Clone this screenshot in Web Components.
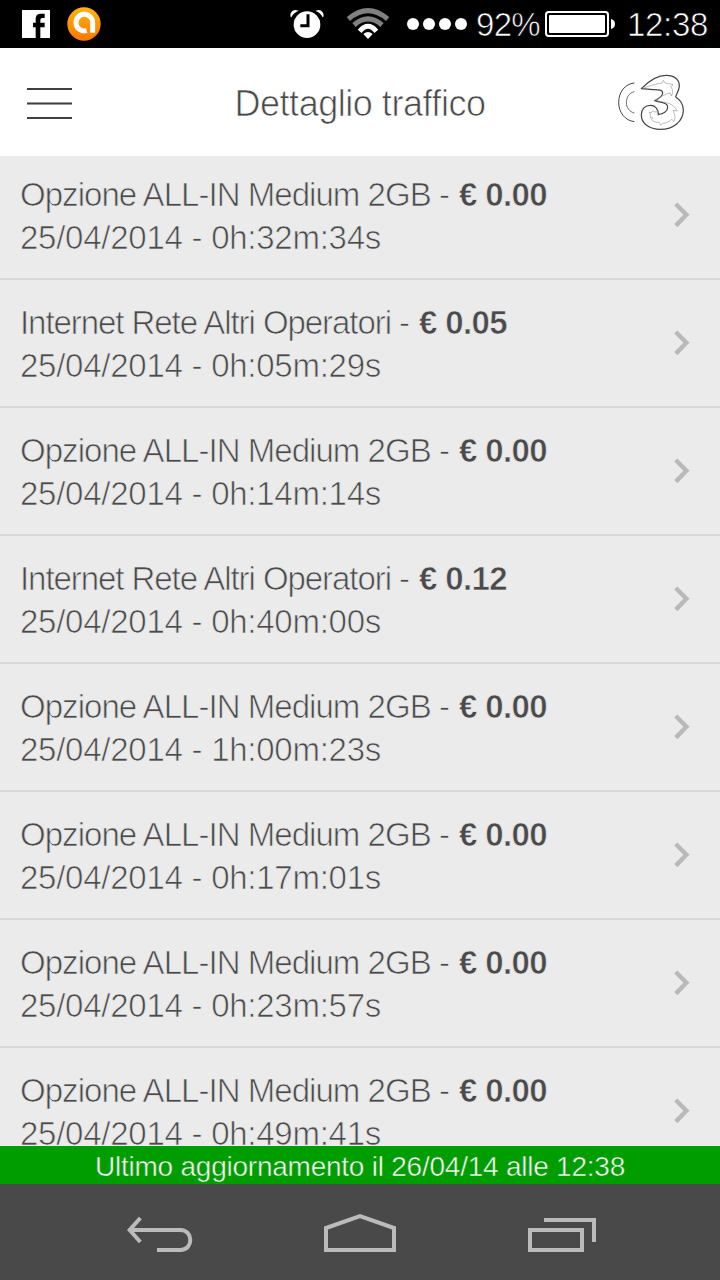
<!DOCTYPE html>
<html lang="it">
<head>
<meta charset="utf-8">
<title>Dettaglio traffico</title>
<style>
  html, body {
    margin: 0;
    background: #000;
  }

  body {
    width: 720px;
    height: 1280px;
    overflow: hidden;
    font-family: "Liberation Sans", Arial, sans-serif;
  }
</style>
</head>
<body>
<phone-screen>
  <status-bar slot="status" battery="92%" time="12:38"></status-bar>
  <app-header slot="header">Dettaglio traffico</app-header>
  <traffic-row kind="all" price="€ 0.00" when="25/04/2014 - 0h:32m:34s">Opzione ALL-IN Medium 2GB -</traffic-row>
  <traffic-row kind="net" price="€ 0.05" when="25/04/2014 - 0h:05m:29s">Internet Rete Altri Operatori -</traffic-row>
  <traffic-row kind="all" price="€ 0.00" when="25/04/2014 - 0h:14m:14s">Opzione ALL-IN Medium 2GB -</traffic-row>
  <traffic-row kind="net" price="€ 0.12" when="25/04/2014 - 0h:40m:00s">Internet Rete Altri Operatori -</traffic-row>
  <traffic-row kind="all" price="€ 0.00" when="25/04/2014 - 1h:00m:23s">Opzione ALL-IN Medium 2GB -</traffic-row>
  <traffic-row kind="all" price="€ 0.00" when="25/04/2014 - 0h:17m:01s">Opzione ALL-IN Medium 2GB -</traffic-row>
  <traffic-row kind="all" price="€ 0.00" when="25/04/2014 - 0h:23m:57s">Opzione ALL-IN Medium 2GB -</traffic-row>
  <traffic-row kind="all" price="€ 0.00" when="25/04/2014 - 0h:49m:41s">Opzione ALL-IN Medium 2GB -</traffic-row>
  <update-bar slot="update">Ultimo aggiornamento il 26/04/14 alle 12:38</update-bar>
  <nav-bar slot="nav"></nav-bar>
</phone-screen>

<script>
class BaseElement extends HTMLElement {
  constructor() {
    super()
    const template = document.createElement('template')
    template.innerHTML = this.render()
    const shadow = this.attachShadow({mode: "open"})
    shadow.append(template.content.cloneNode(true))
  }
}

// Text that is spread or squeezed with letter-spacing to a given width.
// The stroke has the colour of the background, so the letters get thinner.
class FitText extends BaseElement {
  render() {
    return `
      <style>
        :host {
          display: block;
        }

        span {
          display: block;
          width: max-content;
          white-space: pre;
          -webkit-text-stroke: var(--thin, 0.7px) var(--under, #ebebeb);
        }
      </style>
      <span><slot></slot></span>
    `
  }

  connectedCallback() {
    const span = this.shadowRoot.querySelector('span')
    const nodes = this.shadowRoot.querySelector('slot').assignedNodes({flatten: true})
    const count = nodes.map((node) => node.textContent).join('').length
    const natural = span.getBoundingClientRect().width
    span.style.letterSpacing = (Number(this.getAttribute('width')) - natural) / count + 'px'
  }
}

class PhoneScreen extends BaseElement {
  render() {
    return `
      <style>
        :host {
          display: grid;
          grid-template-rows: 48px 108px 990px 38px 96px;
          width: 720px;
          height: 1280px;
        }

        .list {
          overflow: hidden;
          background: #ebebeb;
        }

        .rows {
          margin-top: -4px;
        }
      </style>
      <slot name="status"></slot>
      <slot name="header"></slot>
      <div class="list"><div class="rows"><slot></slot></div></div>
      <slot name="update"></slot>
      <slot name="nav"></slot>
    `
  }
}

class StatusBar extends BaseElement {
  render() {
    return `
      <style>
        :host {
          display: flex;
          align-items: center;
          justify-content: space-between;
          background: #000;
          color: #fff;
          font-size: 33px;
          line-height: 48px;
          --under: #000;
        }

        .group {
          display: flex;
          align-items: center;
          height: 48px;
        }

        .apps {
          padding-left: 20px;
        }

        .info {
          padding-right: 12px;
        }

        svg {
          display: block;
        }

        fit-text {
          padding-top: 2px;
        }

        .battery {
          margin: 0 12px 0 5px;
        }
      </style>
      <div class="group apps">
        <svg width="84" height="48" viewBox="60 0 252 144">
          <defs>
            <linearGradient id="orange" x1="0" y1="0" x2="0" y2="1">
              <stop offset="0" stop-color="#ffb608"/>
              <stop offset="1" stop-color="#ff7600"/>
            </linearGradient>
          </defs>
          <path fill="#fff" d="M66 30H150V114H121V82H134V68H121V60Q121 54 127 54H134V41H122Q107 41 107 57V68H99V82H107V114H66Z"/>
          <circle cx="252" cy="72" r="50" fill="url(#orange)"/>
          <path fill="none" stroke="#fff" stroke-width="15" d="M260 92A25 25 0 1 1 278 70V98"/>
        </svg>
      </div>
      <div class="group info">
        <svg width="186" height="48" viewBox="60 0 558 144">
          <g fill="#fff">
            <circle cx="111" cy="74" r="40"/>
            <path d="M62 51C59 40 66 31 76 30L86 32C75 36 68 43 64 52ZM160 51C163 40 156 31 146 30L136 32C147 36 154 43 158 52Z"/>
            <circle cx="429" cy="72" r="18"/>
            <circle cx="477" cy="72" r="18"/>
            <circle cx="525" cy="72" r="18"/>
            <circle cx="573" cy="72" r="18"/>
          </g>
          <path fill="none" stroke="#000" stroke-width="9" d="M114 43V77H91"/>
          <g fill="none" stroke-width="15">
            <path stroke="#808080" d="M235 57Q294 7 353 57M252 75Q294 38 336 75"/>
            <path stroke="#fff" d="M269 94Q294 64 319 94"/>
          </g>
          <path fill="#fff" d="M280 102Q294 90 308 102L294 117Z"/>
        </svg>
        <fit-text width="64">${this.getAttribute('battery')}</fit-text>
        <svg class="battery" width="70" height="48" viewBox="255 0 210 144">
          <rect x="258" y="36" width="186" height="72" rx="8" fill="none" stroke="#fff" stroke-width="6"/>
          <rect x="267" y="45" width="168" height="54" rx="3" fill="#fff"/>
          <path fill="#fff" d="M453 57Q465 60 465 72T453 87Z"/>
        </svg>
        <fit-text width="81">${this.getAttribute('time')}</fit-text>
      </div>
    `
  }
}

class AppHeader extends BaseElement {
  render() {
    return `
      <style>
        :host {
          display: grid;
          grid-template-columns: 75px 1fr 75px;
          align-items: center;
          padding: 0 27px;
          background: #fff;
          color: #4a4a4a;
          font-size: 36px;
          line-height: 44px;
          --under: #fff;
        }

        .title {
          justify-self: center;
          padding-top: 4px;
        }

        .menu {
          display: block;
        }

        .logo {
          display: block;
          justify-self: end;
          margin-right: 7px;
        }
      </style>
      <svg class="menu" width="45" height="34" viewBox="0 0 45 34">
        <path fill="#3f3d3e" d="M0 3H45V5H0ZM0 32H45V34H0Z"/>
        <path fill="#999" d="M0 17H45V20H0Z"/>
        <path fill="#3f3d3e" d="M0 18H45V19H0Z"/>
      </svg>
      <fit-text class="title" width="251"><slot></slot></fit-text>
      <svg class="logo" width="70" height="60" viewBox="48 36 210 180" fill="none" stroke="#444">
        <path stroke-width="3.6" stroke-linejoin="round" d="M124 86C143 66 172 46 199 46C224 46 239 60 238 79C237 92 229 102 227 111C240 119 250 132 250 151C250 184 220 208 181 208C147 208 124 190 124 165C124 147 135 136 151 136C167 136 174 148 176 163C189 163 203 154 203 141C203 127 184 129 164 122C176 116 188 109 188 99C188 88 174 89 160 89Z"/>
        <path stroke-width="3" d="M103 69C76 71 56 96 56 127C56 158 76 182 103 185"/>
        <path stroke-width="2.4" d="M103 95C87 99 79 113 79 127C79 143 88 155 103 159"/>
        <path stroke="#888" stroke-width="1.7" d="M130 84C149 78 171 70 186 69L190 61L195 69C204 73 211 70 219 74L212 80C219 88 220 99 214 108L211 99C197 101 181 111 168 120M169 121C190 128 211 126 224 142L232 153L219 151C226 164 226 176 222 184L215 178C207 184 200 190 188 190L183 196L178 187C168 188 160 185 154 179L159 174L150 173C153 168 151 160 147 156L154 159C154 152 160 152 165 157C170 151 173 157 172 165L177 166"/>
      </svg>
    `
  }
}

class TrafficRow extends BaseElement {
  render() {
    return `
      <style>
        :host {
          box-sizing: border-box;
          display: flex;
          align-items: center;
          justify-content: space-between;
          height: 128px;
          padding: 0 30px 0 20px;
          border-bottom: 2px solid #d9d9dc;
          color: #4a4a4a;
          font-size: 33px;
          line-height: 43px;
        }

        .text {
          padding-top: 2px;
        }

        .line {
          display: flex;
          height: 43px;
        }

        .price {
          margin-left: 10px;
          font-weight: bold;
          --thin: 0.6px;
        }

        svg {
          display: block;
        }
      </style>
      <div class="text">
        <div class="line">
          <fit-text width="${this.getAttribute('kind') === 'net' ? 389 : 429}"><slot></slot></fit-text>
          <fit-text class="price" width="88">${this.getAttribute('price')}</fit-text>
        </div>
        <div class="line">
          <fit-text width="361">${this.getAttribute('when')}</fit-text>
        </div>
      </div>
      <svg width="16" height="26" viewBox="0 0 16 26">
        <path fill="none" stroke="#b9b9b9" stroke-width="4.4" d="M1.8 2L12.4 12.8L1.8 23.6"/>
      </svg>
    `
  }
}

class UpdateBar extends BaseElement {
  render() {
    return `
      <style>
        :host {
          display: flex;
          justify-content: center;
          background: #009d00;
          color: #fff;
          font-size: 28px;
          line-height: 41px;
          --under: #009d00;
          --thin: 0.5px;
        }
      </style>
      <fit-text width="530"><slot></slot></fit-text>
    `
  }
}

class NavBar extends BaseElement {
  render() {
    return `
      <style>
        :host {
          box-sizing: border-box;
          display: flex;
          justify-content: center;
          align-items: center;
          gap: 90px;
          padding: 6px 0 0 10px;
          background: #49494a;
        }
      </style>
      <svg width="110" height="70" viewBox="0 0 330 210" fill="none" stroke="#bbb" stroke-width="12">
        <path d="M59 90H211C251 90 251 150 211 150H141M91 54L59 90L91 126"/>
      </svg>
      <svg width="110" height="70" viewBox="0 0 330 210" fill="none" stroke="#bbb" stroke-width="12">
        <path d="M48 150V84L150 48L252 84V150Z"/>
      </svg>
      <svg width="110" height="70" viewBox="0 0 330 210" fill="none" stroke="#bbb" stroke-width="12">
        <path d="M60 90H216V150H60ZM102 60H252V126"/>
      </svg>
    `
  }
}

customElements.define('phone-screen', PhoneScreen)
customElements.define('status-bar', StatusBar)
customElements.define('app-header', AppHeader)
customElements.define('traffic-row', TrafficRow)
customElements.define('update-bar', UpdateBar)
customElements.define('nav-bar', NavBar)
// last, when the bars and rows around it have their styles
customElements.define('fit-text', FitText)
</script>
</body>
</html>
